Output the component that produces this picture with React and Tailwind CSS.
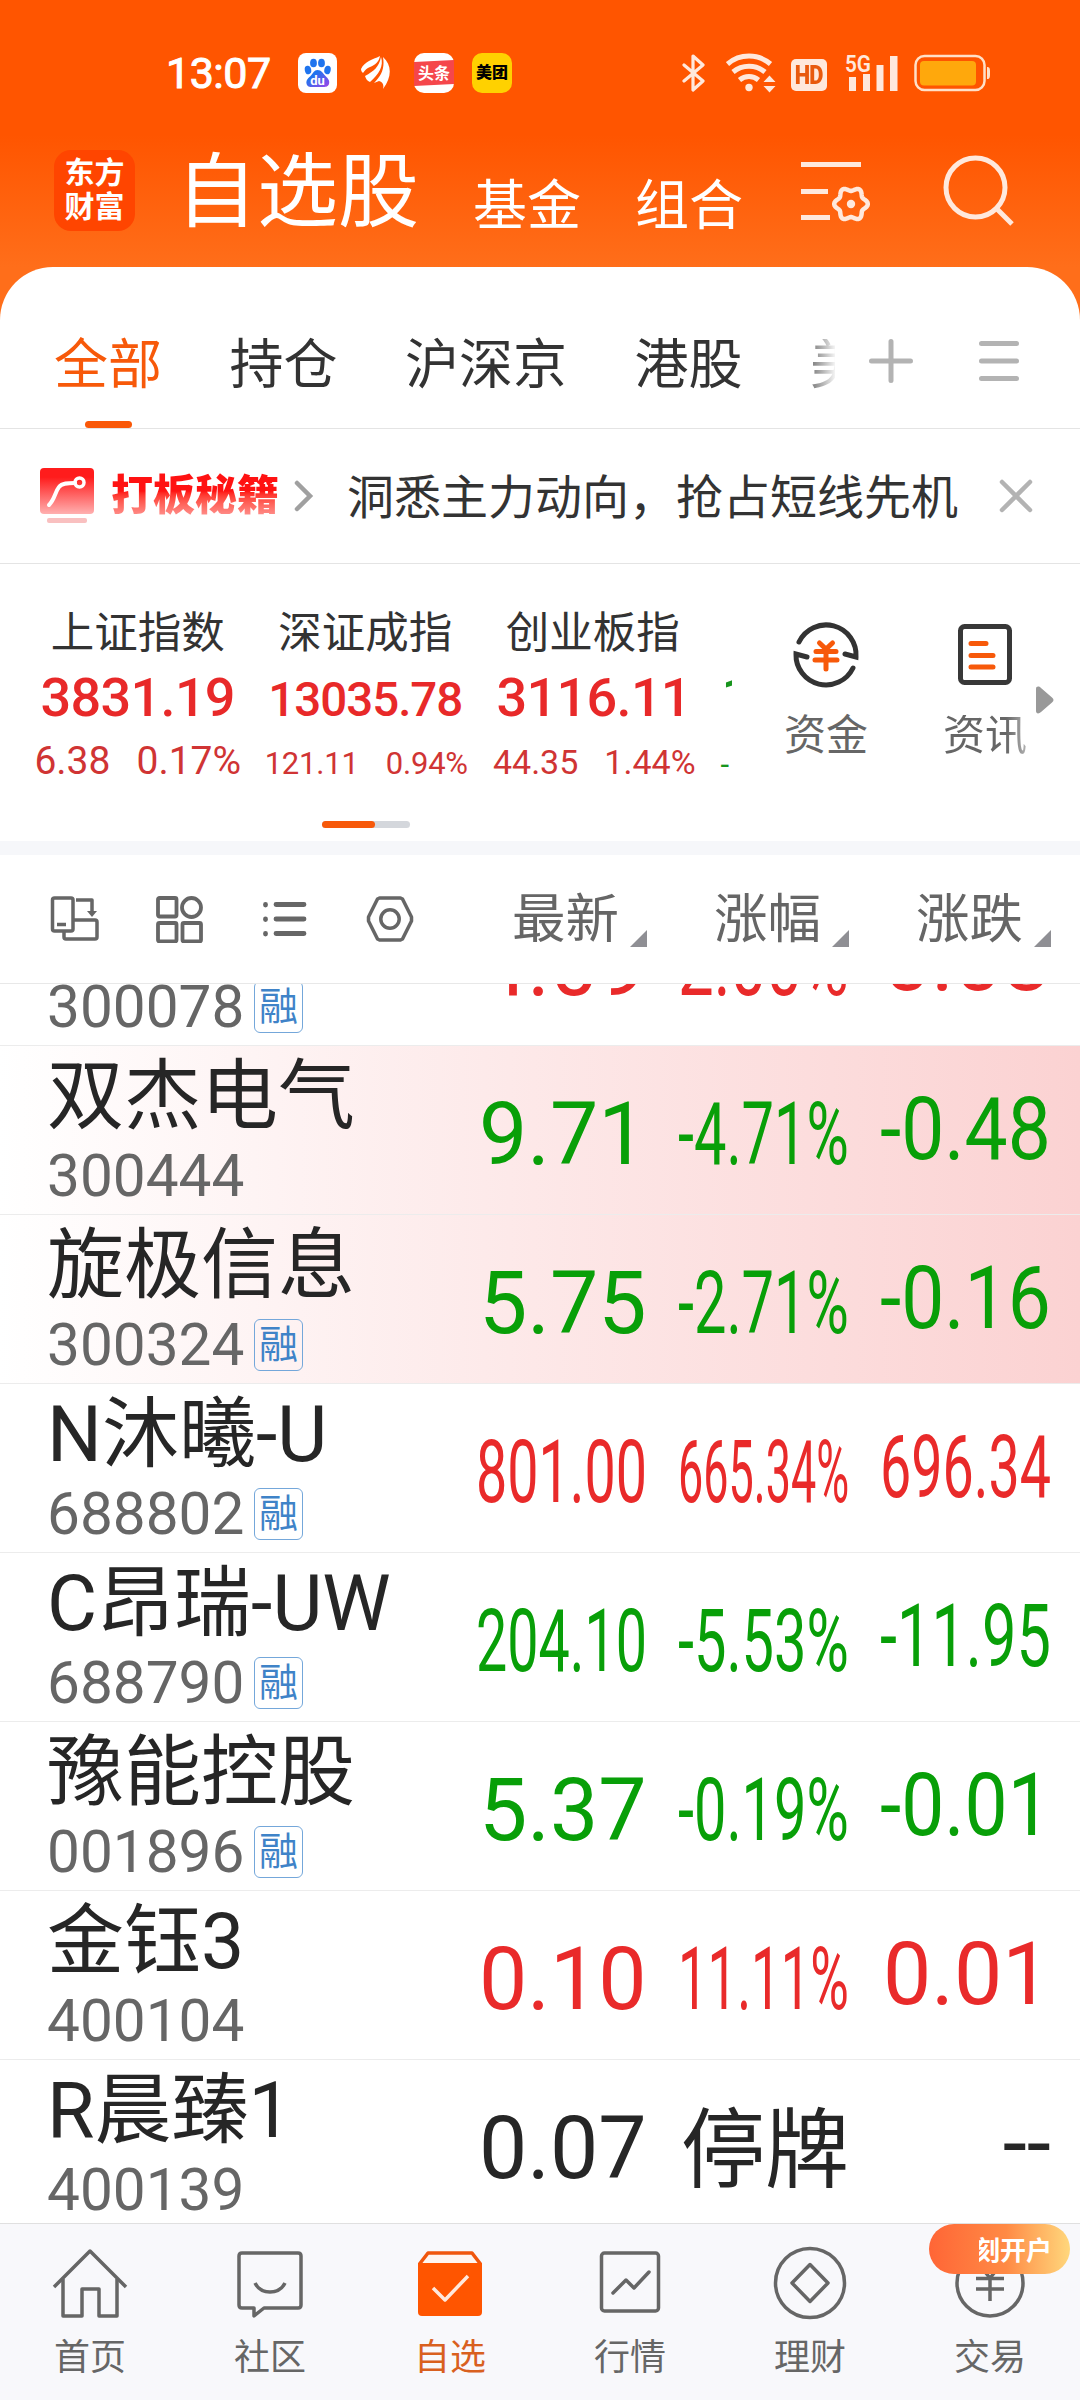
import React, { useLayoutEffect, useRef, useState } from 'react';

const stocks = [
  { name: '欣旺达', code: '300078', margin: true, price: '4.09', rate: '2.00%', change: '0.08', tone: 'up' },
  { name: '双杰电气', code: '300444', price: '9.71', rate: '-4.71%', change: '-0.48', tone: 'down', hot: true },
  { name: '旋极信息', code: '300324', margin: true, price: '5.75', rate: '-2.71%', change: '-0.16', tone: 'down', hot: true },
  { name: 'N沐曦-U', code: '688802', margin: true, price: '801.00', rate: '665.34%', change: '696.34', tone: 'up' },
  { name: 'C昂瑞-UW', code: '688790', margin: true, price: '204.10', rate: '-5.53%', change: '-11.95', tone: 'down' },
  { name: '豫能控股', code: '001896', margin: true, price: '5.37', rate: '-0.19%', change: '-0.01', tone: 'down' },
  { name: '金钰3', code: '400104', price: '0.10', rate: '11.11%', change: '0.01', tone: 'up' },
  { name: 'R晨臻1', code: '400139', price: '0.07', rate: '停牌', change: '--', tone: 'flat' },
];

const tones = {
  up: 'text-[#e92a2a]',
  down: 'text-[#089f08]',
  flat: 'text-[#262626]',
};

const indexes = [
  { name: '上证指数', value: '3831.19', diff: '6.38', rate: '0.17%', valueSize: 'text-[54px] tracking-[-0.7px] leading-[54px]', diffSize: 'text-[39px] gap-[26px]' },
  { name: '深证成指', value: '13035.78', diff: '121.11', rate: '0.94%', valueSize: 'text-[47.500px] tracking-[-1px] leading-[59px]', diffSize: 'text-[31px] gap-[27px] pl-[2px] tracking-[-0.2px]' },
  { name: '创业板指', value: '3116.11', diff: '44.35', rate: '1.44%', valueSize: 'text-[54px] tracking-[-0.7px] leading-[54px] pl-[2px]', diffSize: 'text-[34px] gap-[26px] pl-[3px]' },
];

// Six-lobed outline of the settings gear
const gearPoints = Array.from({ length: 72 }, (_, i) => {
  const angle = (i * Math.PI) / 36;
  const radius = 14.9 + 1.9 * Math.cos(6 * angle);
  return `${(51 + radius * Math.cos(angle)).toFixed(2)},${(46 + radius * Math.sin(angle)).toFixed(2)}`;
}).join(' ');

// Squeezes the text horizontally when it is wider than the column
function FitText({ className = '', children }) {
  const ref = useRef(null);
  const [scale, setScale] = useState(1);
  const max = children.length <= 4 ? 168 : 171;

  useLayoutEffect(() => {
    const width = ref.current.offsetWidth;
    setScale(width > max ? max / width : 1);
  }, [children, max]);

  return (
    <span
      ref={ref}
      className={`block shrink-0 origin-right whitespace-nowrap leading-none ${className}`}
      style={{ transform: `scaleX(${scale})` }}
    >
      {children}
    </span>
  );
}

function StatusBar() {
  return (
    <div className="flex h-[146px] items-center text-white">
      <span className="ml-[166px] w-[109px] text-[43px] leading-none tracking-[-0.5px] [-webkit-text-stroke:1px_white]">13:07</span>
      <svg className="ml-[23px] size-10" viewBox="0 0 40 40">
        <defs>
          <linearGradient id="paw" x1="0" y1="0" x2="1" y2="1">
            <stop offset="0.3" stopColor="#1f74ee" />
            <stop offset="1" stopColor="#a044e8" />
          </linearGradient>
        </defs>
        <rect width="39" height="40" rx="8" fill="#fff" />
        <g fill="#1f74ee">
          <ellipse cx="10" cy="17" rx="3.2" ry="4.3" transform="rotate(-12 10 17)" />
          <ellipse cx="15.500" cy="10" rx="3.400" ry="4.300" />
          <ellipse cx="23.500" cy="10" rx="3.400" ry="4.300" />
          <ellipse cx="29.500" cy="17" rx="3.200" ry="4.300" transform="rotate(12 29.5 17)" />
        </g>
        <path d="M19.500 17c4 0 5.500 3.500 8 6s4.500 4.500 3.500 8c-1 3-4 3-6.500 3h-10c-3 0-5.500-.5-6-3.500-.6-3.500 2-5.500 4-7.500 2.500-2.500 3.500-6 7-6z" fill="url(#paw)" />
        <text x="19.500" y="31.500" fontSize="13" fontWeight="700" fill="#fff" textAnchor="middle">du</text>
      </svg>
      <svg className="ml-[23px] h-[36px] w-[30px]" viewBox="0 0 30 36" fill="#fff">
        <path d="M0 14C4 6 11 5 19 1c-1 6-5 9-10 11-3 1-5 3-7 6-1-1-2-2-2-4z" />
        <path d="M4 21c9-5 14-9 16-19 3 9-2 17-11 25-3-1-4-3-5-6z" />
        <path d="M22 2c9 8 9 20 0 32 1-4 0-7-4-8l-5 2c7-7 11-14 9-26z" />
      </svg>
      <svg className="ml-[23px] size-10" viewBox="0 0 40 40">
        <rect width="40" height="40" rx="10" fill="#fff" />
        <path d="M0 9l40-2v24L0 33z" fill="#f5464b" />
        <text x="20" y="25.500" fontSize="16" fontWeight="700" fill="#fff" textAnchor="middle">头条</text>
      </svg>
      <div className="ml-[18px] flex size-10 items-center justify-center rounded-[10px] bg-[#ffd100] text-[16px] font-black leading-none text-black">
        美团
      </div>

      <svg className="ml-[170px] h-[38px] w-[24px]" viewBox="0 0 24 38" fill="none" stroke="#ffe8dc" strokeWidth="3.200" strokeLinejoin="round" strokeLinecap="round">
        <path d="M2 11l19 16-10 9V2l10 9L2 27" />
      </svg>
      <svg className="ml-[20px] h-[40px] w-[50px]" viewBox="0 0 50 40" fill="none" stroke="#ffe8dc" strokeWidth="5">
        <path d="M1.500 11a33 33 0 0 1 43 0" />
        <path d="M7 19a25 25 0 0 1 32 0" />
        <path d="M13.500 27a15 15 0 0 1 19 0" />
        <circle cx="23" cy="34.500" r="3.700" fill="#ffe8dc" stroke="none" />
        <path d="M43.500 22.500l6 6.500h-12zM43.500 39.500l6-6.500h-12z" fill="#ffe8dc" stroke="none" />
      </svg>
      <div className="ml-[15px] mt-[4px] flex h-[32px] w-[36px] items-center justify-center rounded-[5px] bg-[#ffe8dc] text-[26px] font-black leading-none tracking-[-1px] text-[#e8590e]">
        <span className="scale-x-[0.84]">HD</span>
      </div>
      <svg className="ml-[18px] h-[40px] w-[54px]" viewBox="0 0 54 40" fill="#ffe8dc">
        <text x="0" y="18.500" fontSize="24" fontWeight="600" textLength="26" lengthAdjust="spacingAndGlyphs">5G</text>
        <rect x="4" y="24" width="7" height="14" />
        <rect x="18" y="21" width="7" height="17" />
        <rect x="31.500" y="12" width="7" height="26" />
        <rect x="45" y="3" width="7.500" height="35" />
      </svg>
      <svg className="ml-[15px] h-[38px] w-[78px]" viewBox="0 0 78 38">
        <rect x="1.500" y="2" width="69" height="34" rx="9" fill="none" stroke="#ffe0c8" strokeWidth="2.500" />
        <rect x="6" y="7" width="56" height="24.500" rx="4" fill="#ffa80c" />
        <path d="M73 13c3 0 3 2 3 6s0 6-3 6z" fill="#ffe0c8" />
      </svg>
    </div>
  );
}

function Header() {
  return (
    <div className="flex h-[121px] items-start text-white">
      <div className="ml-[54px] mt-[4px] flex size-[81px] flex-col items-center justify-center gap-[4px] rounded-[17px] bg-[#ff4500] pb-[1px] text-[30px] font-bold leading-none">
        <span>东方</span>
        <span>财富</span>
      </div>
      <span className="ml-[41px] mt-[6px] w-[240px] whitespace-nowrap text-[81px] leading-none">自选股</span>
      <span className="ml-[57px] mt-[34px] w-[106px] whitespace-nowrap text-[54px] leading-none">基金</span>
      <span className="ml-[56px] mt-[34px] w-[106px] whitespace-nowrap text-[54px] leading-none">组合</span>
      <svg className="ml-[59px] mt-[12px] h-[68px] w-[72px]" viewBox="0 0 72 68" fill="none" stroke="#ffe8dc" strokeWidth="5">
        <path d="M1 6.500h60M1 33.500h27M1 59.500h29" />
        <polygon points={gearPoints} strokeWidth="4.500" strokeLinejoin="round" />
        <circle cx="51" cy="46" r="4.200" fill="#ffe8dc" stroke="none" />
      </svg>
      <svg className="ml-[71px] mt-[8px] size-[72px]" viewBox="0 0 72 72" fill="none" stroke="#ffe8dc" strokeWidth="5">
        <circle cx="32.500" cy="33.500" r="29.500" />
        <path d="M53 54l16 16" />
      </svg>
    </div>
  );
}

function Tabs() {
  return (
    <div className="flex h-[162px] border-b border-[#e4e4e4] text-[#333]">
      <div className="flex w-[835px] gap-[67.500px] overflow-hidden whitespace-nowrap pl-[54px] text-[54px] leading-none">
        <div className="flex flex-col items-center text-[#f7590a]">
          <span className="mt-[72px]">全部</span>
          <span className="mt-[28px] h-[7px] w-[47px] rounded-full bg-[#fa5808]" />
        </div>
        <span className="mt-[72px]">持仓</span>
        <span className="mt-[72px]">沪深京</span>
        <span className="mt-[72px]">港股</span>
        <span className="mt-[72px] bg-linear-to-r from-[#777] to-white to-25% bg-clip-text text-transparent">美股</span>
      </div>
      <svg className="ml-[32px] mt-[70px] size-[48px]" viewBox="0 0 48 48" stroke="#b3b3b3" strokeWidth="5" strokeLinecap="round">
        <path d="M4.500 24h39M24 4.500v39" />
      </svg>
      <svg className="ml-[60px] mt-[70px] size-[48px]" viewBox="0 0 48 48" stroke="#b3b3b3" strokeWidth="5" strokeLinecap="round">
        <path d="M6.500 6.500h35M6.500 24h35M6.500 41.500h35" />
      </svg>
    </div>
  );
}

function Banner() {
  return (
    <div className="flex h-[135px] items-center border-b border-[#e4e4e4]">
      <svg className="ml-[40px] h-[56px] w-[54px]" viewBox="0 0 54 56">
        <defs>
          <linearGradient id="tip" x1="0" y1="0" x2="0" y2="1">
            <stop offset="0.200" stopColor="#ff1c1c" />
            <stop offset="1" stopColor="#ffb0b0" />
          </linearGradient>
        </defs>
        <rect width="54" height="46" rx="4" fill="url(#tip)" />
        <path d="M9 37c6-6 6-13 10-18 3-4 9-4 16-4" fill="none" stroke="#fff" strokeWidth="4" strokeLinecap="round" />
        <circle cx="39.500" cy="14.500" r="4.500" fill="none" stroke="#fff" strokeWidth="3.500" />
        <rect x="7" y="50" width="40" height="5" rx="2" fill="#f9c0c0" />
      </svg>
      <span className="ml-[17px] w-[168px] whitespace-nowrap bg-linear-to-b from-[#ff1212] from-40% to-[#ff9c9c] bg-clip-text text-[42px] font-black leading-[48px] text-transparent">
        打板秘籍
      </span>
      <svg className="ml-[14px] h-[34px] w-[22px]" viewBox="0 0 22 34" fill="none" stroke="#a0a0a0" strokeWidth="4.500" strokeLinecap="round">
        <path d="M4 4l13 13L4 30" />
      </svg>
      <span className="ml-[32px] mt-[2px] w-[610px] whitespace-nowrap text-[47px] leading-none text-[#333]">洞悉主力动向，抢占短线先机</span>
      <svg className="ml-[41px] size-[36px]" viewBox="0 0 36 36" stroke="#b3b3b3" strokeWidth="4.500" strokeLinecap="round">
        <path d="M4 4l28 28M32 4L4 32" />
      </svg>
    </div>
  );
}

function IndexPanel() {
  return (
    <div className="h-[277px] overflow-hidden">
      <div className="flex h-[257px]">
        <div className="flex w-[732px] overflow-hidden pl-[24px]">
          {indexes.map((item) => (
            <div key={item.name} className="flex w-[227.500px] shrink-0 flex-col items-center whitespace-nowrap leading-none">
              <span className="mt-[48px] text-[43.500px] text-[#333]">{item.name}</span>
              <span className={`mt-[15px] h-[54px] font-medium text-[#e82929] ${item.valueSize}`}>
                {item.value}
              </span>
              <div className={`mt-[17px] flex h-[38px] items-baseline text-[#d03434] ${item.diffSize}`}>
                <span className="before:inline-block before:h-[32px]">{item.diff}</span>
                <span>{item.rate}</span>
              </div>
            </div>
          ))}
          <div className="shrink-0 text-[#18951e]">
            <span className="ml-[15px] mt-[106px] block h-[54px] text-[54px] font-medium leading-[54px]">1</span>
            <span className="ml-[14px] mt-[22px] block text-[31px] leading-[38px]">-</span>
          </div>
        </div>
        <div className="flex w-[188px] flex-col items-center text-[42px] leading-none text-[#666]">
          <svg className="mt-[55px] size-[72px]" viewBox="0 0 72 72" fill="none" stroke="#333" strokeWidth="5" strokeLinecap="round">
            <path d="M9 23A30 30 0 0 1 66 38l-11-3" />
            <path d="M63 49A30 30 0 0 1 6 35l11 3" />
            <path d="M29.500 24L36 30l6.500-6M26 32.500h20M25 41h22M36 30v20" stroke="#f7590a" />
          </svg>
          <span className="mt-[24px]">资金</span>
        </div>
        <div className="ml-[22px] flex w-[86px] flex-col items-center text-[42px] leading-none text-[#666]">
          <svg className="mt-[54px] size-[72px]" viewBox="0 0 72 72" fill="none" stroke="#383838" strokeWidth="5" strokeLinecap="round">
            <rect x="11.500" y="8.500" width="49" height="56" rx="4" />
            <path d="M22 25.500h15M22 37.500h22M22 49h22" stroke="#f7590a" />
          </svg>
          <span className="mt-[25px] bg-linear-to-r from-[#666] from-75% to-[#b4b4b4] bg-clip-text text-transparent">资讯</span>
        </div>
        <svg className="ml-[8px] mt-[121px] h-[30px] w-[20px]" viewBox="0 0 20 30" fill="#999">
          <path d="M0 4c0-3 3-3 5-1l11 9.500c2 2 2 3 0 5L5 27c-2 2-5 2-5-1z" />
        </svg>
      </div>
      <div className="ml-[322px] h-[7px] w-[88px] rounded-full bg-[#d4d7dc]">
        <div className="h-full w-[53px] rounded-full bg-[#f7590a]" />
      </div>
    </div>
  );
}

function SortLabel({ children }) {
  return (
    <div className="flex w-[202px] items-end pl-[67px]">
      <span className="w-[107px] whitespace-nowrap text-[53.500px] leading-none">{children}</span>
      <svg className="ml-[11px] size-[17px] shrink-0" viewBox="0 0 17 17" fill="#8f8f94">
        <path d="M17 0v17H0z" />
      </svg>
    </div>
  );
}

function Toolbar() {
  return (
    <div className="flex h-[129px] items-center border-b border-[#e8e8e8] text-[#666]">
      <svg className="ml-[50px] size-[50px]" viewBox="0 0 50 50" fill="none" stroke="#666" strokeWidth="3.500" strokeLinejoin="round">
        <rect x="2.500" y="4" width="20.500" height="33" rx="2" />
        <path d="M7 30.500h9M26 6h16v13M23 26h22a2 2 0 0 1 2 2v15a2 2 0 0 1-2 2H16a2 2 0 0 1-2-2v-6" />
        <path d="M37 17h10l-5 6z" fill="#666" stroke="none" />
      </svg>
      <svg className="ml-[55px] size-[48px]" viewBox="0 0 48 48" fill="none" stroke="#666" strokeWidth="3.800">
        <rect x="3" y="3" width="18.500" height="18.500" rx="1.500" />
        <circle cx="36.500" cy="12.500" r="9.500" />
        <rect x="3" y="28" width="18.500" height="18.500" rx="1.500" />
        <rect x="27.500" y="28" width="18.500" height="18.500" rx="1.500" />
      </svg>
      <svg className="ml-[58px] h-[40px] w-[48px]" viewBox="0 0 48 40" stroke="#666" strokeWidth="4.800" strokeLinecap="round">
        <path d="M15 5.500h28M15 20h28M15 34.500h28M4.500 5.500v.5M4.500 20v.5M4.500 34.500v.5" />
      </svg>
      <svg className="ml-[57px] size-[48px]" viewBox="0 0 48 48" fill="none" stroke="#666" strokeWidth="3.500" strokeLinejoin="round">
        <path d="M13.500 3h21l2 1 9 18v4l-9 18-2 1h-21l-2-1-9-18v-4l9-18z" />
        <circle cx="24" cy="24" r="9.200" />
      </svg>
      <div className="ml-[31px] mt-[2px] flex">
        <SortLabel>最新</SortLabel>
        <SortLabel>涨幅</SortLabel>
        <SortLabel>涨跌</SortLabel>
      </div>
    </div>
  );
}

function StockRow({ stock }) {
  return (
    <div
      className={`flex h-[169px] shrink-0 border-b border-[#ececec] ${
        stock.hot ? 'bg-linear-to-r from-white via-[#fdeaea] via-45% to-[#fbd2d2]' : ''
      }`}
    >
      <div className="w-[430px] pl-[47px]">
        <div className="mt-[13px] h-[78px] whitespace-nowrap text-[77px] leading-none text-[#262626]">{stock.name}</div>
        <div className="mt-[9px] flex items-start">
          <span className="w-[198px] text-[58.500px] leading-[60px] text-[#666]">{stock.code}</span>
          {stock.margin && (
            <span className="ml-[9px] mt-[4px] flex h-[52px] w-[49px] items-center justify-center rounded-[6px] border-[1.500px] border-[#74a7da] text-[39px] leading-none text-[#3f83c8]">
              融
            </span>
          )}
        </div>
      </div>
      <div className={`flex text-[87.500px] ${tones[stock.tone]}`}>
        <div className="mt-[45px] flex w-[217px] justify-end">
          <FitText>{stock.price}</FitText>
        </div>
        <div className="mt-[45px] flex w-[202px] justify-end">
          <FitText className={stock.rate === '停牌' ? 'mt-[3px]' : ''}>{stock.rate}</FitText>
        </div>
        <div className="mt-[40px] flex w-[202px] justify-end">
          <FitText>{stock.change}</FitText>
        </div>
      </div>
    </div>
  );
}

const navItems = [
  {
    label: '首页',
    icon: (
      <>
        <path d="M4 42L40 6l36 36" />
        <path d="M13 34v37h19V44h17v27h18V34" />
      </>
    ),
  },
  {
    label: '社区',
    icon: (
      <>
        <path d="M12 8h56q3 0 3 3v49q0 3-3 3H34l-10 8v-8H12q-3 0-3-3V11q0-3 3-3z" />
        <path d="M25 38c6 12 24 12 30 0" />
      </>
    ),
  },
  {
    label: '自选',
    active: true,
    icon: (
      <>
        <path d="M9.500 19L18 8h44l8.500 11" fill="#fff5f0" stroke="#f0560d" strokeWidth="3.500" />
        <path d="M8 18h64v49q0 4-4 4H12q-4 0-4-4z" fill="#ff5500" stroke="none" />
        <path d="M23 43l12 12 23-24" stroke="#ffe8dc" />
      </>
    ),
  },
  {
    label: '行情',
    icon: (
      <>
        <rect x="11.500" y="8" width="57" height="58" rx="3" />
        <path d="M23 48l13-13 8 8 15-16" strokeLinecap="round" />
      </>
    ),
  },
  {
    label: '理财',
    icon: (
      <>
        <circle cx="40" cy="38" r="34.500" />
        <path d="M40 19.500l18 18.500-18 18.500L22 38z" />
      </>
    ),
  },
  {
    label: '交易',
    promo: '刻开户',
    icon: (
      <>
        <circle cx="40" cy="38" r="33" />
        <path d="M30 21l10 12 10-12M26 33.500h28M26 44h28M40 33v23" />
      </>
    ),
  },
];

function BottomNav() {
  return (
    <div className="grid h-[177px] grid-cols-6 border-t border-[#e0e0e0] bg-[#f8f8fb]">
      {navItems.map((item) => (
        <div
          key={item.label}
          className={`relative flex flex-col items-center text-[36px] leading-none ${item.active ? 'text-[#d9601f]' : 'text-[#666]'}`}
        >
          <svg className="mt-[21px] size-[80px]" viewBox="0 0 80 80" fill="none" stroke="#666" strokeWidth="3.500" strokeLinejoin="round">
            {item.icon}
          </svg>
          <span className="mt-[15px]">{item.label}</span>
          {item.promo && (
            <div className="absolute left-[29px] top-0 flex h-[50px] w-[141px] items-center justify-end rounded-[25px] bg-linear-to-r from-[#ff6536] via-[#ff8a45] via-55% to-[#ffd77c] pr-[18px] pt-[3px]">
              <span className="flex w-[73px] justify-end overflow-hidden whitespace-nowrap text-[26px] font-bold leading-[36px] text-white">{item.promo}</span>
            </div>
          )}
        </div>
      ))}
    </div>
  );
}

export default function App() {
  return (
    <div className="flex h-[2400px] w-[1080px] flex-col overflow-hidden bg-white font-[Roboto,'Noto_Sans_CJK_SC',sans-serif]">
      <div className="bg-[linear-gradient(#ff5500_135px,#ff6e1a_267px)]">
        <StatusBar />
        <Header />
        <div className="rounded-t-[53px] bg-white">
          <Tabs />
          <Banner />
        </div>
      </div>
      <IndexPanel />
      <div className="h-[14px] shrink-0 bg-[#f6f7fa]" />
      <Toolbar />
      <div className="h-[1239px] shrink-0 overflow-hidden">
        <div className="mt-[-107px] flex flex-col">
          {stocks.map((stock) => (
            <StockRow key={stock.code} stock={stock} />
          ))}
        </div>
      </div>
      <BottomNav />
    </div>
  );
}
